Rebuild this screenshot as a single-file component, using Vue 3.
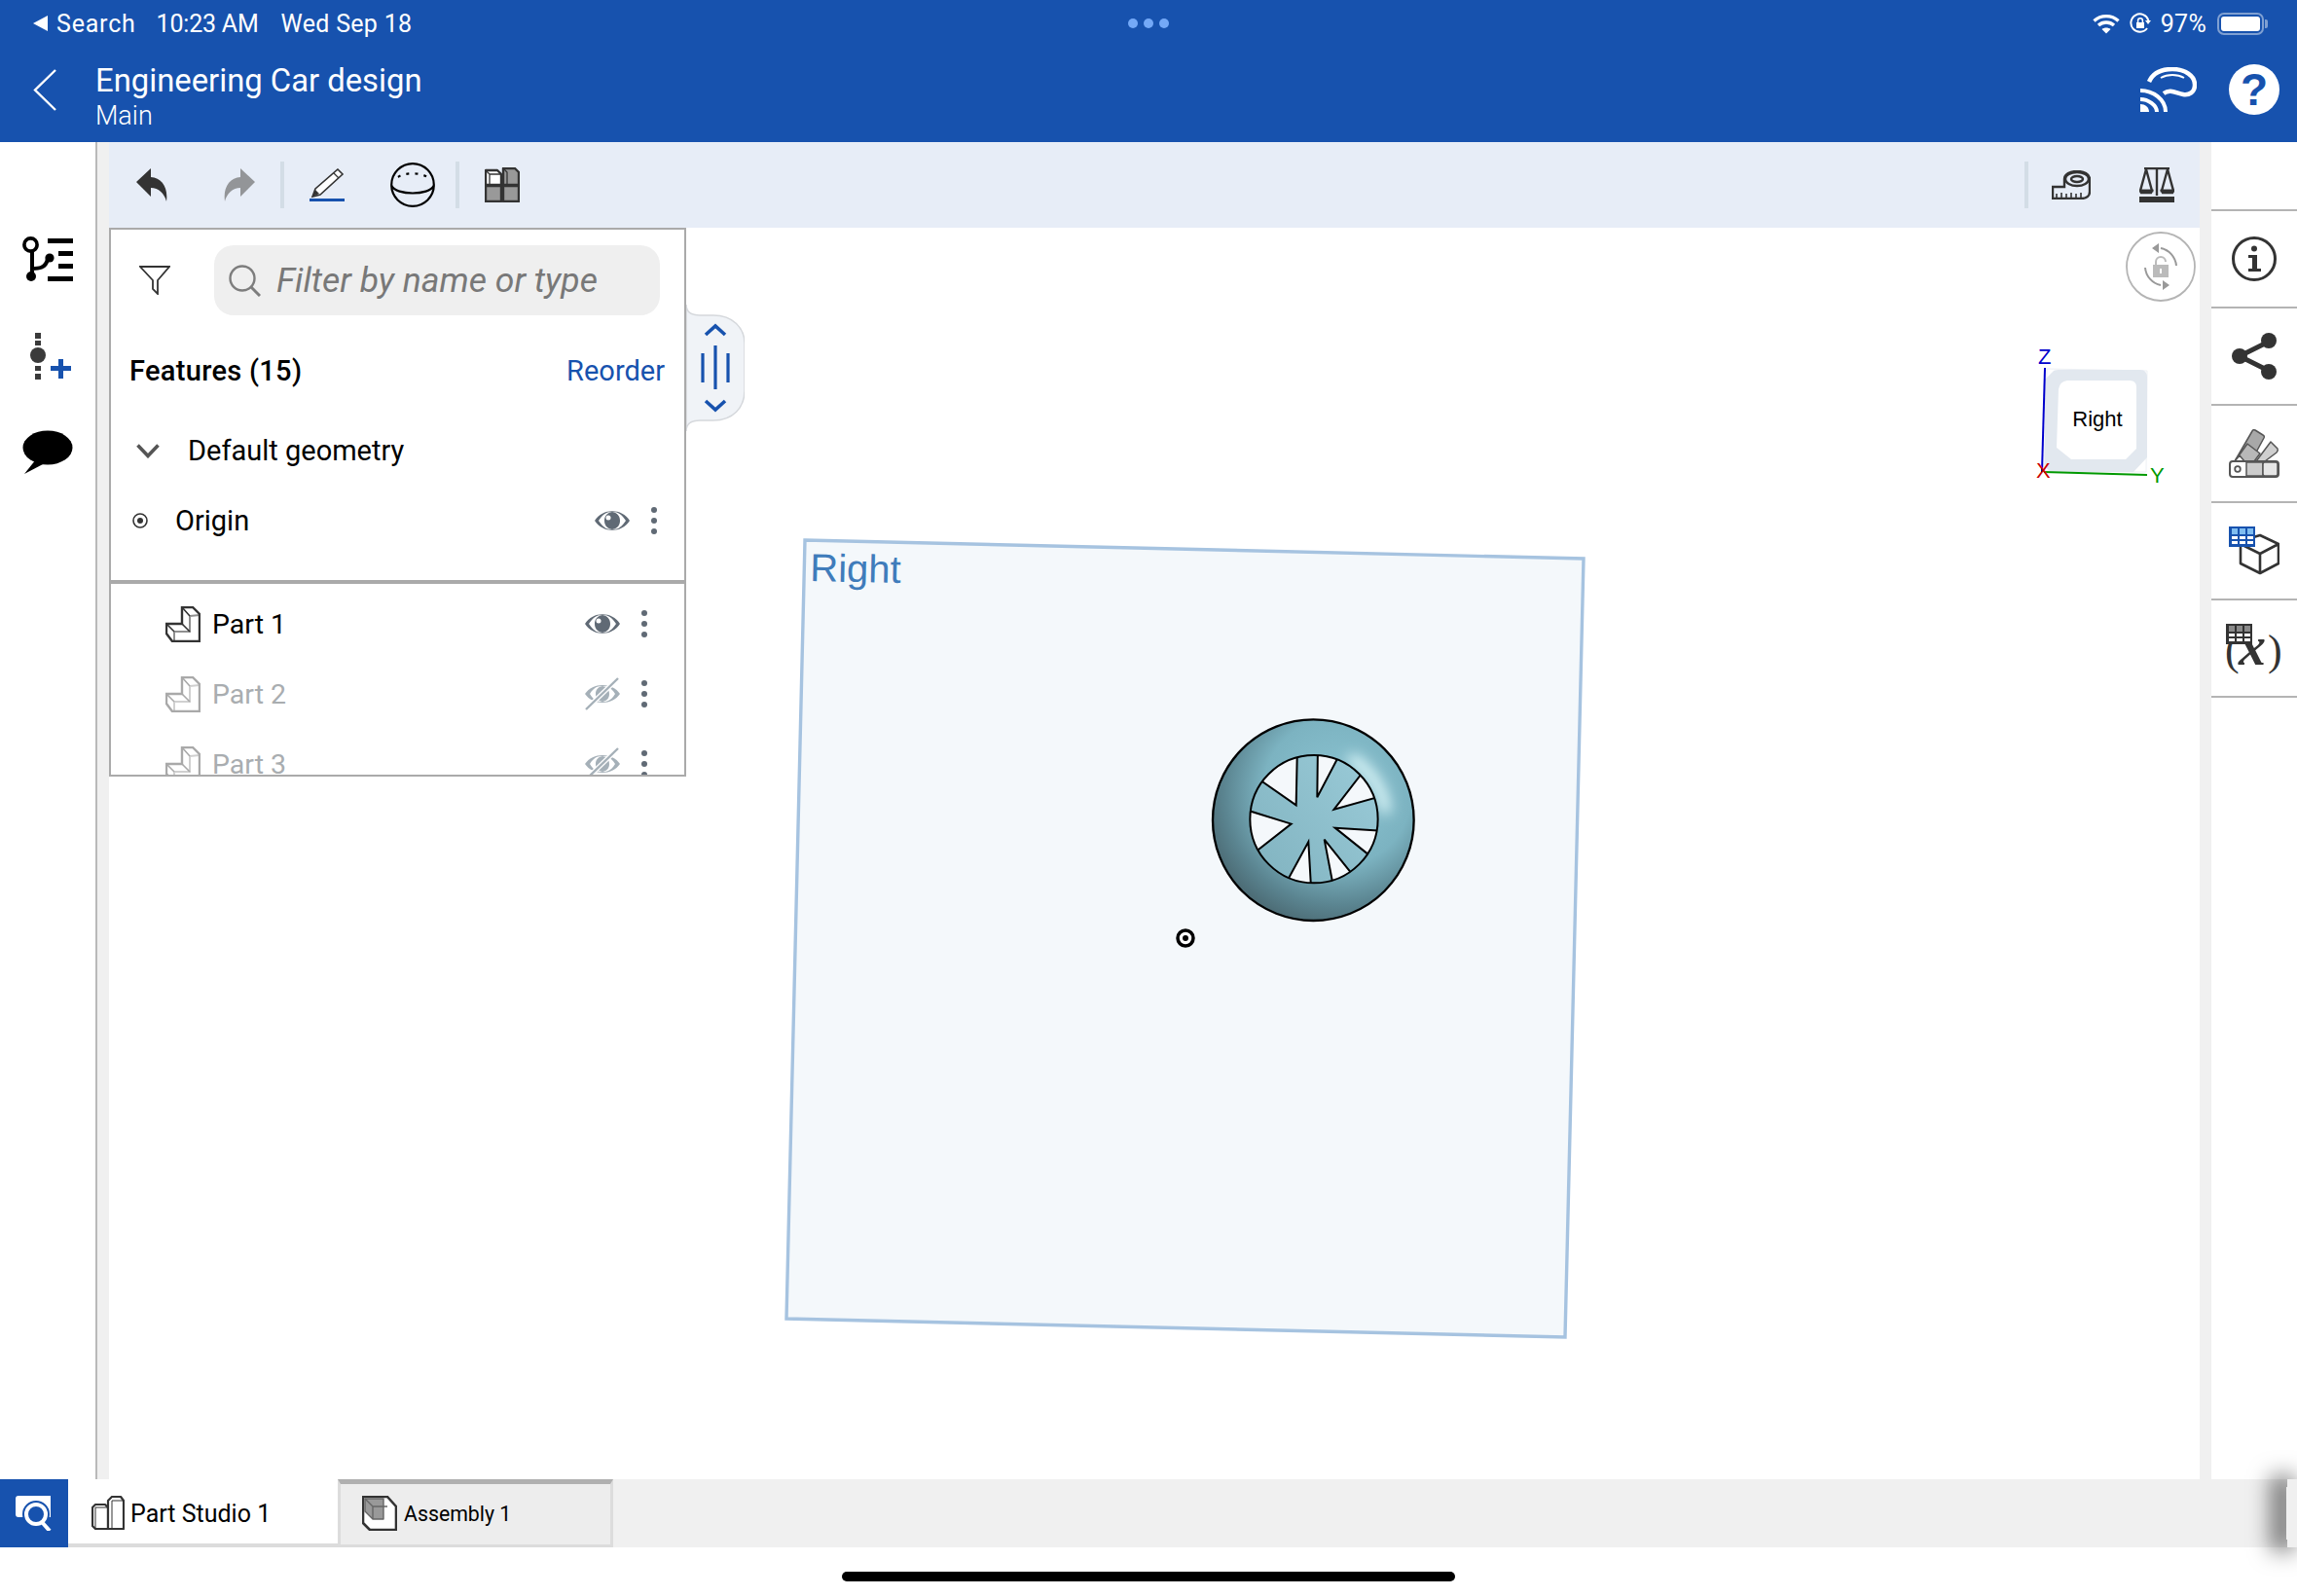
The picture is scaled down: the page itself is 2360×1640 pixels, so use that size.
<template>
  <div class="app">
    <header class="header">
      <div class="status">
        <span class="status-left">
          <svg width="15" height="16" viewBox="0 0 15 16"><path d="M15 0V16L0 8Z" fill="#fff" /></svg>
          <span class="search-back">Search</span>
          <span class="clock">10:23 AM</span>
          <span class="date">Wed Sep 18</span>
        </span>
        <span class="multitask"><i></i><i></i><i></i></span>
        <span class="status-right">
          <svg width="28" height="21" viewBox="0 0 28 21" fill="none" stroke="#fff" stroke-width="3.4">
            <path d="M1.5 7.5C8.5 1 19.5 1 26.5 7.5" />
            <path d="M6 12C10.5 8 17.5 8 22 12" />
            <path d="M14 20.5L9.5 16C12 14 16 14 18.5 16Z" fill="#fff" stroke="none" />
          </svg>
          <svg class="orient" width="22" height="22" viewBox="0 0 22 22" fill="none" stroke="#fff" stroke-width="2">
            <path d="M18 16A9.2 9.2 0 1 1 19.4 8" />
            <path d="M16 8H22L19 12Z" fill="#fff" stroke="none" />
            <rect x="7" y="10" width="8" height="6" fill="#fff" stroke="none" />
            <path d="M8.6 10V8.2A2.4 2.4 0 0 1 13.4 8.2V10" stroke-width="1.5" />
          </svg>
          <span class="battery-pct">97%</span>
          <span class="battery"><span class="battery-fill"></span></span>
          <span class="battery-cap"></span>
        </span>
      </div>
      <div class="titlebar">
        <svg class="back" width="24" height="43" viewBox="0 0 24 43" fill="none" stroke="#fff" stroke-width="2.4"><path d="M23 1L2 21.5L23 42" /></svg>
        <div class="doc">
          <div class="doc-name">Engineering Car design</div>
          <div class="doc-branch">Main</div>
        </div>
        <svg class="cast" width="58" height="46" viewBox="0 0 58 46" fill="none" stroke="#fff">
          <path d="M9 15C13 6 22 2 33 2C46 2 56 9 56 18C56 26 50 29 44 28C37 27 31 22 24 27" stroke-width="4.5" />
          <path d="M21 11C28 7 38 7 45 11" stroke-width="2" />
          <path d="M0 24C13 24 26 33 26 46" stroke-width="4" />
          <path d="M0 33C8 33 17 39 17 46" stroke-width="4" />
          <path d="M0 46V38C5 38 9 41 9 46Z" fill="#fff" stroke="none" />
        </svg>
        <span class="help">?</span>
      </div>
    </header>

    <main class="main">
      <aside class="left-rail">
        <svg width="52" height="47" viewBox="0 0 52 47">
          <circle cx="8.5" cy="8.5" r="6.6" fill="none" stroke="#000" stroke-width="3.6" />
          <path d="M10 15V41M10 33C16 33 24 33 26 23" fill="none" stroke="#000" stroke-width="4" />
          <circle cx="9" cy="41" r="5" fill="#000" />
          <circle cx="28" cy="22" r="4.6" fill="#000" />
          <path d="M26 2H52V7H26ZM37 15H52V20H37ZM37 28H52V33H37ZM26 41H52V46H26Z" fill="#000" />
        </svg>
        <svg class="add-feature" width="42" height="48" viewBox="0 0 42 48">
          <path d="M5 0H11V6H5ZM5 8H11V13H5ZM5 34H11V39H5ZM5 42H11V48H5Z" fill="#3a3a3a" />
          <circle cx="8" cy="23" r="8" fill="#3a3a3a" />
          <path d="M29 27H34V34H42V39H34V47H29V39H21V34H29Z" fill="#1752ae" />
        </svg>
        <svg width="52" height="46" viewBox="0 0 52 46">
          <ellipse cx="26" cy="18" rx="25.5" ry="17.5" fill="#000" />
          <path d="M14 30L2 45L23 34Z" fill="#000" />
        </svg>
      </aside>
      <div class="strip strip-left"></div>

      <section class="center">
        <div class="toolbar">
          <svg class="tb-first" width="32" height="34" viewBox="0 0 32 34"><path d="M0 14L15 0V9C26 10 33 19 31 34C29 26 23 20 15 20V29Z" fill="#333" /></svg>
          <svg class="tb-redo" width="32" height="34" viewBox="0 0 32 34"><path d="M32 14L17 0V9C6 10-1 19 1 34C3 26 9 20 17 20V29Z" fill="#939598" /></svg>
          <span class="tb-sep tb-sep-one"></span>
          <svg class="tb-sketch" width="36" height="34" viewBox="0 0 36 34">
            <path d="M29 1L34 6L11 27L3 29L6 21Z" fill="#fff" stroke="#333" stroke-width="1.6" />
            <path d="M25 5L30 10" fill="none" stroke="#333" stroke-width="1.2" />
            <path d="M3 29L6 22L10 26Z" fill="#333" />
            <rect y="31" width="36" height="3" fill="#1752ae" />
          </svg>
          <svg class="tb-plane" width="46" height="46" viewBox="0 0 46 46" fill="none" stroke="#000" stroke-width="2.2">
            <circle cx="23" cy="23" r="21.8" />
            <path d="M1.5 24C6 34 40 34 44.5 24" />
            <path d="M8 15C15 10 31 10 38 15" stroke-dasharray="3 6" />
          </svg>
          <span class="tb-sep tb-sep-two"></span>
          <svg class="tb-grid" width="36" height="36" viewBox="0 0 36 36" stroke="#333" stroke-width="2.4" stroke-linejoin="round">
            <path d="M1 3H13L17 7V18H1Z" fill="#fff" />
            <path d="M19 1H31L35 5V18H19Z" fill="#999" />
            <rect x="1" y="19" width="16" height="16" fill="#999" />
            <rect x="19" y="19" width="16" height="16" fill="#999" />
            <path d="M1 3L5 7H17M5 7V18M19 1L23 5V18" fill="none" stroke-width="1.3" />
          </svg>
          <span class="tb-right">
            <span class="tb-sep"></span>
            <svg class="tb-tape" width="40" height="30" viewBox="0 0 40 30" fill="none" stroke="#333" stroke-width="2.4">
              <path d="M1 28V17H13V9C13 4 19 1 26 1C33 1 39 4 39 9V22C39 26 36 29 30 29H1Z" />
              <ellipse cx="26" cy="9" rx="12" ry="7" />
              <ellipse cx="26" cy="9" rx="6" ry="3" fill="#e7edf7" />
              <path d="M5 28V24M10 28V23M15 28V24M20 28V23M25 28V24M30 28V23" stroke-width="1.6" />
            </svg>
            <svg class="tb-scale" width="36" height="36" viewBox="0 0 36 36" fill="none" stroke="#333" stroke-width="2.4">
              <path d="M5 1H31M18 1V29" />
              <path d="M7 2L1 24H13Z M29 2L23 24H35Z" />
              <path d="M1 24H13L12 26H2ZM23 24H35L34 26H24Z" fill="#333" />
              <rect y="30" width="36" height="6" fill="#333" stroke="none" />
            </svg>
          </span>
        </div>

        <div class="viewport">
          <svg class="scene" viewBox="112 234 2148 1286">
            <defs>
              <radialGradient id="tire" cx="0.62" cy="0.36" r="0.74">
                <stop offset="0" stop-color="#8cc4d2" />
                <stop offset="0.5" stop-color="#7cb3c1" />
                <stop offset="0.76" stop-color="#5b8591" />
                <stop offset="1" stop-color="#445e66" />
              </radialGradient>
              <linearGradient id="hub" x1="0" y1="1" x2="1" y2="0.2">
                <stop offset="0" stop-color="#80b2bf" />
                <stop offset="1" stop-color="#98c9d6" />
              </linearGradient>
              <clipPath id="hub-clip"><circle cx="390" cy="365" r="197" /></clipPath>
              <clipPath id="tire-clip"><circle cx="388" cy="368" r="310" /></clipPath>
              <filter id="glow" x="-60%" y="-60%" width="220%" height="220%"><feGaussianBlur stdDeviation="20" /></filter>
            </defs>

            <path d="M827 555L1627 574L1608 1374L808 1355Z" fill="#f4f8fb" stroke="#a6c3e0" stroke-width="3.4" />
            <text x="832" y="597" class="plane-label" transform="rotate(1.3 832 597)">Right</text>

            <g transform="translate(1220 720) scale(0.3333)">
              <circle cx="388" cy="368" r="310" fill="url(#tire)" />
              <g clip-path="url(#tire-clip)">
                <path d="M500 175A225 225 0 0 1 612 345" fill="none" stroke="#e8feff" stroke-width="30" filter="url(#glow)" />
              </g>
              <circle cx="388" cy="368" r="310" fill="none" stroke="#000" stroke-width="7" />
              <g clip-path="url(#hub-clip)">
                <rect x="190" y="165" width="400" height="400" fill="url(#hub)" />
                <g fill="#f4f8fb" stroke="#000" stroke-width="6" stroke-linejoin="miter">
                  <path d="M335 322L190 221L250 130L339 130Z" />
                  <path d="M400 298L402 130L480 145Z" />
                  <path d="M452 335L560 195L640 200L620 288Z" />
                  <path d="M455 392L640 404L640 500L590 500Z" />
                  <path d="M422 428L540 575L540 600L455 600Z" />
                  <path d="M373 435L383 610L285 597Z" />
                  <path d="M320 380L140 324L120 420L170 497Z" />
                </g>
              </g>
              <circle cx="390" cy="365" r="197" fill="none" stroke="#000" stroke-width="6" />
            </g>

            <circle cx="1218" cy="964" r="8" fill="#fff" stroke="#000" stroke-width="3.5" />
            <circle cx="1218" cy="964" r="3" fill="#000" />

            <path d="M2103 379L2206 381L2205 485L2100 484Z" fill="#fff" stroke="#eef1f5" stroke-width="1" />
            <path d="M2109 382Q2110 380 2115 380H2199Q2206 380 2206 388V470L2192 485H2112Q2101 485 2101 474V390Z" fill="#e2e8ef" />
            <path d="M2124 391Q2116 392 2115 400L2113 460L2128 472H2184L2195 461V398Q2195 391 2188 391Z" fill="#fff" />
            <text x="2155" y="438" class="gizmo-face">Right</text>
            <path d="M2101 378L2098 485" stroke="#0000cc" stroke-width="2" />
            <path d="M2100 485L2206 488" stroke="#009900" stroke-width="2" />
            <text x="2094" y="374" class="gizmo-axis" fill="#0000cc">Z</text>
            <text x="2092" y="491" class="gizmo-axis" fill="#cc0000">X</text>
            <text x="2209" y="496" class="gizmo-axis" fill="#009900">Y</text>
          </svg>

          <div class="rotate-lock">
            <svg width="72" height="72" viewBox="0 0 72 72" fill="none" stroke="#b4b4b4">
              <circle cx="36" cy="36" r="35" stroke-width="1.8" />
              <path d="M36 17A20 20 0 0 1 52 35" stroke="#999" stroke-width="2" />
              <path d="M20 37A20 20 0 0 0 36 55" stroke="#999" stroke-width="2" />
              <path d="M34 12V22L27 17ZM38 50V60L45 55Z" fill="#999" stroke="none" />
              <rect x="28" y="34" width="16" height="13" fill="#bbb" stroke="none" />
              <path d="M31 34V31A5 5 0 0 1 41 31" stroke="#bbb" stroke-width="2" />
              <rect x="35" y="38" width="2" height="5" fill="#fff" stroke="none" />
            </svg>
          </div>

          <div class="panel">
            <div class="features">
              <div class="search-row">
                <svg width="32" height="30" viewBox="0 0 32 30" fill="none" stroke="#333" stroke-width="1.8"><path d="M1 1H31L19 15V29L14 24V15Z" /></svg>
                <div class="search">
                  <svg width="33" height="33" viewBox="0 0 33 33" fill="none" stroke="#7d7d7d" stroke-width="2.4"><circle cx="14" cy="14" r="12.5" /><path d="M23 23L32 32" stroke-width="3" /></svg>
                  <span class="search-text">Filter by name or type</span>
                </div>
              </div>
              <div class="features-head">
                <span class="features-title">Features (15)</span>
                <span class="reorder">Reorder</span>
              </div>
              <div class="geometry">
                <svg width="24" height="15" viewBox="0 0 24 15" fill="none" stroke="#555" stroke-width="3.6"><path d="M1.5 1.5L12 12.5L22.5 1.5" /></svg>
                <span>Default geometry</span>
              </div>
              <div class="origin">
                <svg width="16" height="16" viewBox="0 0 16 16"><circle cx="8" cy="8" r="7" fill="none" stroke="#333" stroke-width="1.6" /><circle cx="8" cy="8" r="3" fill="#333" /></svg>
                <span class="row-name">Origin</span>
                <svg class="eye" width="36" height="24" viewBox="0 0 36 24">
                  <path d="M0 12C8-1 28-1 36 12C28 25 8 25 0 12Z" fill="#606a75" />
                  <path d="M4 12C10 3 14 3 18 3C12 4 10 8 10 12C10 16 12 20 18 21C14 21 10 21 4 12ZM18 3C22 3 26 3 32 12C26 21 22 21 18 21C24 20 26 16 26 12C26 8 24 4 18 3Z" fill="#fff" />
                  <circle cx="14" cy="9" r="2.5" fill="#fff" />
                </svg>
                <span class="dots"><i></i><i></i><i></i></span>
              </div>
            </div>

            <div class="parts">
              <div v-for="part in parts" :key="part.name" class="part" :class="{ hidden: part.hidden }">
                <svg class="part-icon" width="36" height="37" viewBox="0 0 36 37" fill="none" stroke="currentColor">
                  <path d="M17 1H28L35 8V36H7L1 28V18H17Z" stroke-width="2.4" />
                  <path d="M17 1L25 10M17 18L25 26M1 18L9 26" stroke-width="1.6" />
                  <path d="M25 10L35 9M25 10V26H9V36" stroke-width="2" opacity="0.55" />
                </svg>
                <span class="row-name">{{ part.name }}</span>
                <svg v-if="!part.hidden" class="eye" width="36" height="24" viewBox="0 0 36 24">
                  <path d="M0 12C8-1 28-1 36 12C28 25 8 25 0 12Z" fill="#606a75" />
                  <path d="M4 12C10 3 14 3 18 3C12 4 10 8 10 12C10 16 12 20 18 21C14 21 10 21 4 12ZM18 3C22 3 26 3 32 12C26 21 22 21 18 21C24 20 26 16 26 12C26 8 24 4 18 3Z" fill="#fff" />
                  <circle cx="14" cy="9" r="2.5" fill="#fff" />
                </svg>
                <svg v-else class="eye" width="36" height="34" viewBox="0 0 36 34">
                  <path d="M0 17C8 5 28 5 36 17C28 29 8 29 0 17Z" fill="#a5b0b8" />
                  <path d="M5 17C10 9 14 9 18 9C13 10 11 13 11 17C11 21 13 24 18 25C14 25 10 25 5 17ZM18 9C22 9 26 9 31 17C26 25 22 25 18 25C23 24 25 21 25 17C25 13 23 10 18 9Z" fill="#fff" />
                  <path d="M1 33L34 1" stroke="#fff" stroke-width="5" />
                  <path d="M1 33L34 1" stroke="#a5b0b8" stroke-width="2.4" />
                </svg>
                <span class="dots"><i></i><i></i><i></i></span>
              </div>
            </div>

            <div class="handle">
              <svg width="60" height="130" viewBox="0 0 60 130">
                <path d="M0 0C0 7 5 11 14 11H28C48 11 60 24 60 40V88C60 106 48 119 28 119H14C5 119 0 123 0 130Z" fill="#f0f3f7" stroke="#d5d8dc" stroke-width="1.5" />
                <path d="M20 31L30 22L40 31M20 99L30 108L40 99" fill="none" stroke="#1752ae" stroke-width="3.6" />
                <path d="M17 50V80M30 42V87M43 50V80" fill="none" stroke="#1752ae" stroke-width="3.2" />
              </svg>
            </div>
          </div>
        </div>
      </section>

      <div class="strip strip-right"></div>
      <aside class="right-rail">
        <div class="rail-item">
          <svg width="46" height="46" viewBox="0 0 46 46" fill="none" stroke="#333">
            <circle cx="23" cy="23" r="21.5" stroke-width="3" />
            <circle cx="23" cy="12.5" r="3" fill="#333" stroke="none" />
            <path d="M17 19H26V33H30V36H17V33H21V22H17Z" fill="#333" stroke="none" />
          </svg>
        </div>
        <div class="rail-item">
          <svg width="46" height="48" viewBox="0 0 46 48" fill="#333" stroke="#333">
            <path d="M38 9L8 24L38 39" fill="none" stroke-width="5" />
            <circle cx="38" cy="8" r="8" stroke="none" />
            <circle cx="8" cy="24" r="8" stroke="none" />
            <circle cx="38" cy="40" r="8" stroke="none" />
          </svg>
        </div>
        <div class="rail-item">
          <svg width="52" height="50" viewBox="0 0 52 50" stroke="#555" stroke-width="1.5" stroke-linejoin="round">
            <path d="M28 33L43 13L50 20Q51 22 49 24L37 33Z" fill="#cfcfcf" />
            <path d="M6 33L24 2Q25 0 27 1L35 6Q37 7 36 9L23 33Z" fill="#a8a8a8" />
            <path d="M6 33L19 15L32 25L26 33Z" fill="#b8b8b8" />
            <path d="M6 33L11 27L16 33Z" fill="#fff" />
            <rect x="1" y="33" width="50" height="16" rx="3" fill="#fff" stroke-width="2" />
            <rect x="18" y="34" width="17" height="14" fill="#ccc" />
            <rect x="35" y="34" width="15" height="14" rx="2" fill="#e6e6e6" />
            <circle cx="9" cy="41" r="2.8" fill="#fff" stroke-width="1.8" />
          </svg>
        </div>
        <div class="rail-item">
          <svg width="52" height="50" viewBox="0 0 52 50">
            <path d="M12 15L32 9L51 18V38L32 48L12 38ZM12 15V38M12 18L32 28L51 18M32 28V48" fill="#fff" stroke="#333" stroke-width="2.6" stroke-linejoin="round" />
            <rect width="27" height="21" fill="#1752ae" />
            <g fill="#7fbdf0">
              <rect x="3" y="2" width="6" height="6" /><rect x="11" y="2" width="6" height="6" /><rect x="19" y="2" width="6" height="6" />
            </g>
            <g fill="#fff">
              <rect x="3" y="10" width="6" height="3" /><rect x="11" y="10" width="6" height="3" /><rect x="19" y="10" width="6" height="3" />
              <rect x="3" y="15" width="6" height="3" /><rect x="11" y="15" width="6" height="3" /><rect x="19" y="15" width="6" height="3" />
            </g>
          </svg>
        </div>
        <div class="rail-item">
          <svg width="64" height="66" viewBox="-3 -8 64 66">
            <text x="-1" y="42" class="fx-paren">(</text>
            <text x="13" y="42" class="fx-x">x</text>
            <text x="43" y="42" class="fx-paren">)</text>
            <rect width="27" height="21" fill="#333" />
            <g fill="#8a8a8a">
              <rect x="3" y="2" width="6" height="6" /><rect x="11" y="2" width="6" height="6" /><rect x="19" y="2" width="6" height="6" />
            </g>
            <g fill="#fff">
              <rect x="3" y="10" width="6" height="3" /><rect x="11" y="10" width="6" height="3" /><rect x="19" y="10" width="6" height="3" />
              <rect x="3" y="15" width="6" height="3" /><rect x="11" y="15" width="6" height="3" /><rect x="19" y="15" width="6" height="3" />
            </g>
          </svg>
        </div>
      </aside>
    </main>

    <footer class="tabbar">
      <div class="tab-search">
        <svg width="38" height="36" viewBox="0 0 38 36">
          <path d="M3 0H36V22H3Q0 22 0 19V3Q0 0 3 0Z" fill="#fff" />
          <circle cx="21" cy="19" r="11" fill="#1752ae" stroke="#1752ae" stroke-width="6" />
          <circle cx="21" cy="19" r="10" fill="#1752ae" stroke="#fff" stroke-width="4" />
          <path d="M27 27L35 36" stroke="#fff" stroke-width="4" />
        </svg>
      </div>
      <div class="tab tab-active">
        <svg width="34" height="36" viewBox="0 0 34 36" fill="#fff" stroke="#333" stroke-linejoin="round">
          <path d="M1 12L4 9H14L17 12V34H4L1 31Z" stroke-width="2.2" />
          <path d="M17 5L21 1H30L33 5V34H17Z" stroke-width="2.2" />
          <path d="M4 12H17M4 12V33M21 5H33M21 5V33" stroke-width="1" fill="none" />
        </svg>
        <span>Part Studio 1</span>
      </div>
      <div class="tab tab-other">
        <svg width="36" height="36" viewBox="0 0 36 36" stroke="#333" stroke-linejoin="round">
          <path d="M1 1H26L35 11V35H8L1 28Z" fill="#fff" stroke-width="2.6" />
          <path d="M3 3H22V24H11L3 16Z" fill="#999" stroke="#666" stroke-width="1.4" />
          <path d="M3 3L11 11H26M11 11V24" fill="none" stroke="#666" stroke-width="1.4" />
        </svg>
        <span>Assembly 1</span>
      </div>
      <div class="tab-fade"></div>
      <div class="tab-cap"></div>
    </footer>

    <div class="home-area"><span class="home-bar"></span></div>
  </div>
</template>

<script setup>
const parts = [
  { name: 'Part 1', hidden: false },
  { name: 'Part 2', hidden: true },
  { name: 'Part 3', hidden: true }
]
</script>

<style>
html, body {
  background: #fff;
}
</style>

<style scoped>
.app {
  width: 2360px;
  height: 1640px;
  display: flex;
  flex-direction: column;
  overflow: hidden;
  font-family: Roboto, "Liberation Sans", sans-serif;
  color: #000;
  background: #fff;
}
.header {
  height: 146px;
  flex: none;
  background: #1752ae;
  color: #fff;
}
.status {
  height: 46px;
  display: flex;
  align-items: center;
  justify-content: space-between;
  padding: 2px 30px 0 34px;
  font-size: 25px;
  letter-spacing: 0.3px;
  box-sizing: border-box;
  position: relative;
}
.status-left {
  display: flex;
  align-items: center;
}
.search-back {
  margin-left: 9px;
  letter-spacing: 0.8px;
}
.clock {
  margin-left: 21px;
  letter-spacing: -0.2px;
}
.date {
  margin-left: 23px;
}
.multitask {
  position: absolute;
  left: 1159px;
  top: 19px;
  display: flex;
  gap: 6px;
}
.multitask i {
  width: 10px;
  height: 10px;
  border-radius: 50%;
  background: #74a9f7;
}
.status-right {
  display: flex;
  align-items: center;
}
.orient {
  margin-left: 10px;
}
.battery-pct {
  margin-left: 10px;
}
.battery {
  margin-left: 11px;
  width: 48px;
  height: 23px;
  box-sizing: border-box;
  border: 2px solid rgba(255, 255, 255, 0.45);
  border-radius: 7px;
  padding: 2px;
  display: flex;
}
.battery-fill {
  flex: 1;
  background: #fff;
  border-radius: 3px;
}
.battery-cap {
  width: 3px;
  height: 9px;
  margin-left: 1px;
  background: rgba(255, 255, 255, 0.45);
  border-radius: 0 2px 2px 0;
}
.titlebar {
  height: 100px;
  display: flex;
  align-items: flex-start;
  padding-left: 34px;
  padding-right: 18px;
}
.back {
  margin-top: 25px;
}
.doc {
  margin-left: 40px;
  margin-top: 18px;
  flex: 1;
}
.doc-name {
  font-size: 32.8px;
  line-height: 38px;
}
.doc-branch {
  font-size: 27px;
  line-height: 32px;
  font-weight: 300;
  margin-top: 1px;
}
.cast {
  margin-top: 23px;
}
.help {
  width: 52px;
  height: 52px;
  margin-left: 33px;
  margin-top: 20px;
  border-radius: 50%;
  background: #fff;
  color: #1752ae;
  font-family: "Liberation Sans", sans-serif;
  font-weight: 700;
  font-size: 46px;
  line-height: 52px;
  text-align: center;
}
.main {
  flex: 1;
  min-height: 0;
  display: flex;
}
.left-rail {
  width: 98px;
  flex: none;
  display: flex;
  flex-direction: column;
  align-items: center;
  gap: 52px;
  padding-top: 97px;
  box-sizing: border-box;
}
.add-feature {
  margin-left: 6px;
}
.strip {
  flex: none;
  background: #f0f0f0;
}
.strip-left {
  width: 14px;
  box-sizing: border-box;
  border-left: 2px solid #b9b9b9;
}
.strip-right {
  width: 12px;
}
.center {
  flex: 1;
  min-width: 0;
  display: flex;
  flex-direction: column;
}
.toolbar {
  height: 88px;
  flex: none;
  display: flex;
  align-items: center;
  padding: 0 26px 0 28px;
  background: #e7edf7;
}
.tb-redo {
  margin-left: 58px;
}
.tb-sep {
  width: 4px;
  height: 48px;
  background: #d3dde6;
  flex: none;
}
.tb-sep-one {
  margin-left: 26px;
}
.tb-sketch {
  margin-left: 26px;
}
.tb-plane {
  margin-left: 47px;
}
.tb-sep-two {
  margin-left: 21px;
}
.tb-grid {
  margin-left: 26px;
}
.tb-right {
  margin-left: auto;
  display: flex;
  align-items: center;
}
.tb-tape {
  margin-left: 24px;
}
.tb-scale {
  margin-left: 50px;
}
.viewport {
  flex: 1;
  min-height: 0;
  position: relative;
  background: #fff;
}
.scene {
  position: absolute;
  inset: 0;
  width: 100%;
  height: 100%;
}
.plane-label {
  font-family: "Liberation Sans", sans-serif;
  font-size: 40px;
  fill: #3f7cbb;
}
.gizmo-face {
  font-family: "Liberation Sans", sans-serif;
  font-size: 22px;
  fill: #000;
  text-anchor: middle;
}
.gizmo-axis {
  font-family: "Liberation Sans", sans-serif;
  font-size: 22px;
}
.rotate-lock {
  position: absolute;
  top: 4px;
  right: 4px;
  width: 72px;
  height: 72px;
}
.panel {
  position: absolute;
  left: 0;
  top: 0;
  width: 593px;
  height: 564px;
  box-sizing: border-box;
  border: 2px solid #aaa;
  background: #fff;
  display: flex;
  flex-direction: column;
}
.features {
  height: 364px;
  flex: none;
  box-sizing: border-box;
  border-bottom: 4px solid #aaa;
}
.search-row {
  display: flex;
  align-items: center;
  gap: 45px;
  padding: 16px 0 0 29px;
}
.search {
  width: 458px;
  height: 72px;
  box-sizing: border-box;
  padding-left: 15px;
  display: flex;
  align-items: center;
  gap: 16px;
  background: #efefef;
  border-radius: 20px;
}
.search-text {
  font-size: 35.5px;
  font-style: italic;
  color: #787878;
}
.features-head {
  height: 42px;
  margin-top: 36px;
  padding: 0 20px 0 19px;
  display: flex;
  align-items: center;
  justify-content: space-between;
  font-size: 29px;
}
.features-title {
  font-weight: 500;
  letter-spacing: 0.3px;
}
.reorder {
  color: #1752ae;
}
.geometry {
  height: 46px;
  margin-top: 38px;
  padding-left: 26px;
  display: flex;
  align-items: center;
  gap: 29px;
  font-size: 29px;
}
.origin {
  height: 46px;
  margin-top: 26px;
  padding: 0 28px 0 22px;
  display: flex;
  align-items: center;
  font-size: 29px;
}
.origin .row-name {
  margin-left: 28px;
  flex: 1;
}
.eye {
  flex: none;
}
.dots {
  margin-left: 22px;
  width: 6px;
  display: flex;
  flex-direction: column;
  gap: 5px;
}
.dots i {
  width: 6px;
  height: 6px;
  border-radius: 50%;
  background: #606a75;
}
.parts {
  flex: 1;
  min-height: 0;
  overflow: hidden;
  padding-top: 5px;
}
.part {
  height: 72px;
  display: flex;
  align-items: center;
  padding: 0 38px 0 56px;
  font-size: 28.5px;
  color: #333;
}
.part .row-name {
  margin-left: 12px;
  flex: 1;
  color: #000;
}
.part.hidden {
  color: #a9a9a9;
}
.part.hidden .row-name {
  color: #a9adb0;
}
.handle {
  position: absolute;
  left: calc(100% + 2px);
  top: 77px;
  width: 60px;
  height: 130px;
}
.right-rail {
  width: 88px;
  flex: none;
  padding-top: 69px;
  box-sizing: border-box;
}
.rail-item {
  height: 100px;
  box-sizing: border-box;
  border-top: 2px solid #b4b4b4;
  display: flex;
  align-items: center;
  justify-content: center;
}
.rail-item:last-child {
  height: 102px;
  border-bottom: 2px solid #b4b4b4;
}
.fx-paren {
  font-family: "Liberation Serif", serif;
  font-size: 44px;
  fill: #333;
}
.fx-x {
  font-family: "Liberation Serif", serif;
  font-style: italic;
  font-weight: 700;
  font-size: 56px;
  fill: #333;
}
.tabbar {
  height: 70px;
  flex: none;
  display: flex;
  background: #f0f0f0;
  position: relative;
}
.tab-search {
  width: 70px;
  display: flex;
  align-items: center;
  justify-content: center;
  background: #1752ae;
}
.tab {
  display: flex;
  align-items: center;
  box-sizing: border-box;
}
.tab-active {
  width: 277px;
  padding-left: 24px;
  padding-top: 4px;
  gap: 6px;
  background: #fff;
  border-bottom: 4px solid #dcdcdc;
  font-size: 25px;
}
.tab-other {
  width: 283px;
  padding-left: 22px;
  padding-bottom: 2px;
  gap: 7px;
  background: #ededed;
  border: 3px solid #dcdcdc;
  border-top: 5px solid #b0b0b0;
  font-size: 21.3px;
}
.tab-fade {
  position: absolute;
  right: 10px;
  top: 8px;
  bottom: 8px;
  width: 1px;
  box-shadow: -4px 0 22px 12px rgba(0, 0, 0, 0.5);
}
.tab-cap {
  position: absolute;
  right: 0;
  top: 0;
  bottom: 0;
  width: 10px;
  background: #f0f0f0;
}
.home-area {
  height: 50px;
  flex: none;
  display: flex;
  justify-content: center;
  padding-top: 25px;
  box-sizing: border-box;
}
.home-bar {
  width: 630px;
  height: 10px;
  border-radius: 5px;
  background: #000;
}
</style>
